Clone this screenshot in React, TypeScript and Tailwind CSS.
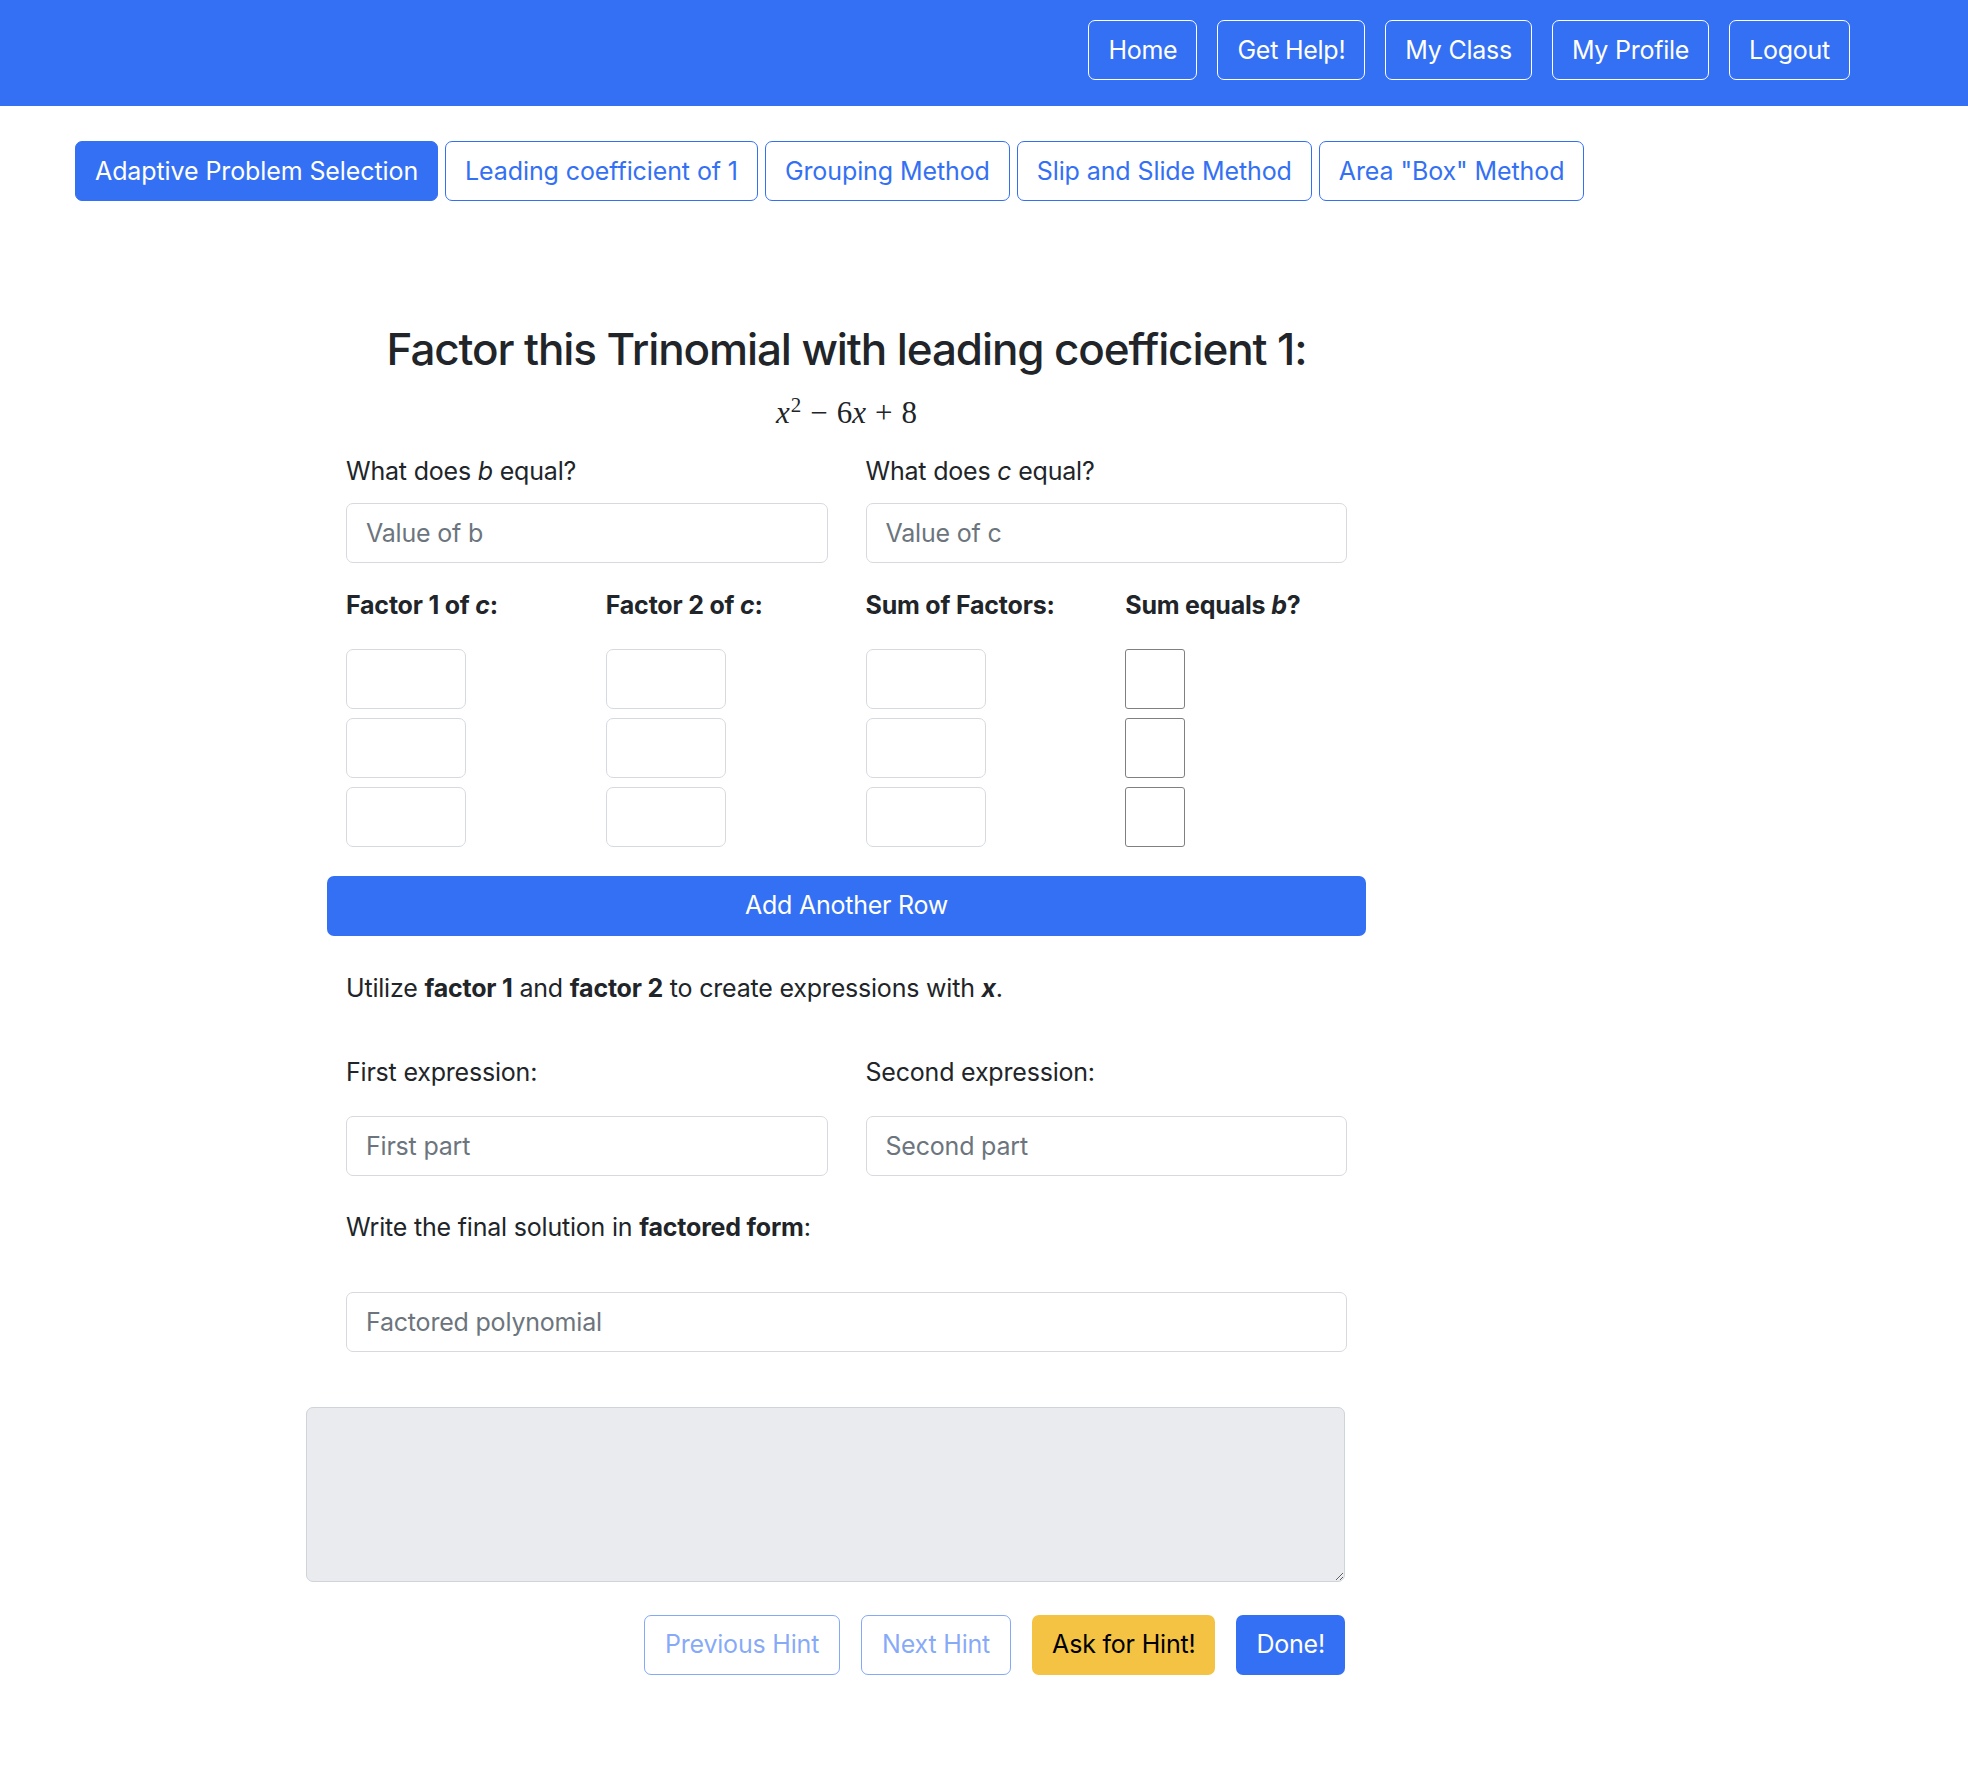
import React from 'react';

const navLinks = ['Home', 'Get Help!', 'My Class', 'My Profile', 'Logout'];
const tabs = ['Adaptive Problem Selection', 'Leading coefficient of 1', 'Grouping Method', 'Slip and Slide Method', 'Area "Box" Method'];

const inputCls =
  'w-full h-[60px] border border-[#d6dadf] rounded-[7px] px-[19px] text-[25px] tracking-[-0.2px] text-[#212529] placeholder:text-[#6c757d] outline-none bg-white';

export default function App() {
  return (
    <div className="min-h-screen bg-white font-['Inter',sans-serif] text-[#212529] text-[25px] tracking-[-0.2px]">
      {/* Top navbar */}
      <header className="h-[106px] bg-[#3470F3] flex justify-end items-start pt-[20px] pr-[118px] gap-[20px]">
        {navLinks.map((l) => (
          <button key={l} className="h-[60px] px-[19px] border border-white rounded-[7px] text-white text-[25px] leading-none tracking-[-0.25px]">
            {l}
          </button>
        ))}
      </header>

      {/* Method tabs */}
      <div className="flex gap-[7px] pl-[75px] mt-[35px]">
        {tabs.map((t, i) => (
          <button
            key={t}
            className={
              i === 0
                ? 'h-[60px] px-[19px] rounded-[7px] bg-[#3470F3] border border-[#3470F3] text-white text-[25px] leading-none tracking-[-0.1px]'
                : 'h-[60px] px-[19px] rounded-[7px] bg-white border border-[#3470F3] text-[#3470F3] text-[25px] leading-none tracking-[-0.1px]'
            }
          >
            {t}
          </button>
        ))}
      </div>

      {/* Problem form */}
      <div className="ml-[327px] w-[1039px] flex flex-col">
        <h3 className="mt-[122px] text-center text-[44px] font-medium leading-[53px] tracking-[-1.1px]">
          Factor this Trinomial with leading coefficient 1:
        </h3>
        <div className="mt-[19px] h-[36px] text-center font-['Liberation_Serif',serif] text-[31px] leading-[36px] tracking-normal">
          <i>x</i>
          <span className="text-[21px] relative -top-[11px] ml-[1px]">2</span>
          <span className="mx-[9px]">−</span>6<i>x</i>
          <span className="mx-[9px]">+</span>8
        </div>

        <div className="flex mt-[21px]">
          <div className="w-1/2 px-[19px]">
            <div className="h-[38px] leading-[38px]">
              What does <i>b</i> equal?
            </div>
            <input className={inputCls + ' mt-[13px]'} placeholder="Value of b" />
          </div>
          <div className="w-1/2 px-[19px]">
            <div className="h-[38px] leading-[38px]">
              What does <i>c</i> equal?
            </div>
            <input className={inputCls + ' mt-[13px]'} placeholder="Value of c" />
          </div>
        </div>

        <div className="flex mt-[23px] font-bold">
          <div className="w-1/4 px-[19px] h-[38px] leading-[38px]">
            Factor 1 of <i>c</i>:
          </div>
          <div className="w-1/4 px-[19px] h-[38px] leading-[38px]">
            Factor 2 of <i>c</i>:
          </div>
          <div className="w-1/4 px-[19px] h-[38px] leading-[38px]">Sum of Factors:</div>
          <div className="w-1/4 px-[19px] h-[38px] leading-[38px]">
            Sum equals <i>b</i>?
          </div>
        </div>

        <div className="mt-[25px] flex flex-col gap-[9px]">
          {[0, 1, 2].map((r) => (
            <div key={r} className="flex">
              {[0, 1, 2].map((c) => (
                <div key={c} className="w-1/4 px-[19px]">
                  <input className="w-[120px] h-[60px] border border-[#d6dadf] rounded-[7px] bg-white outline-none" />
                </div>
              ))}
              <div className="w-1/4 px-[19px]">
                <input
                  type="checkbox"
                  className="appearance-none block w-[60px] h-[60px] border-[1.5px] border-[#808080] rounded-[3px] bg-white"
                />
              </div>
            </div>
          ))}
        </div>

        <button className="mt-[29px] h-[60px] w-full rounded-[7px] bg-[#3470F3] text-white text-[25px] tracking-[-0.25px]">
          Add Another Row
        </button>

        <div className="mt-[33px] px-[19px] h-[38px] leading-[38px]">
          Utilize <b>factor 1</b> and <b>factor 2</b> to create expressions with <b><i>x</i></b>.
        </div>

        <div className="flex mt-[46px]">
          <div className="w-1/2 px-[19px]">
            <div className="h-[38px] leading-[38px]">First expression:</div>
            <input className={inputCls + ' mt-[25px]'} placeholder="First part" />
          </div>
          <div className="w-1/2 px-[19px]">
            <div className="h-[38px] leading-[38px]">Second expression:</div>
            <input className={inputCls + ' mt-[25px]'} placeholder="Second part" />
          </div>
        </div>

        <div className="mt-[32px] px-[19px] h-[38px] leading-[38px]">
          Write the final solution in <b>factored form</b>:
        </div>

        <div className="mt-[46px] px-[19px]">
          <input className={inputCls} placeholder="Factored polynomial" />
        </div>
      </div>

      {/* Hint area */}
      <div className="ml-[306px] w-[1039px] pb-[118px]">
        <textarea
          readOnly
          className="mt-[55px] block w-full h-[175px] bg-[#e9ebef] border border-[#ced4da] rounded-[7px] outline-none"
        />
        <div className="mt-[33px] flex justify-end gap-[21px]">
          <button className="h-[60px] px-[20px] rounded-[7px] border border-[#3470F3]/60 text-[#3470F3]/60 text-[25px] tracking-[-0.2px]">
            Previous Hint
          </button>
          <button className="h-[60px] px-[20px] rounded-[7px] border border-[#3470F3]/60 text-[#3470F3]/60 text-[25px] tracking-[-0.2px]">
            Next Hint
          </button>
          <button className="h-[60px] px-[20px] rounded-[7px] bg-[#F5C344] text-black text-[25px] tracking-[-0.2px]">Ask for Hint!</button>
          <button className="h-[60px] px-[20px] rounded-[7px] bg-[#3470F3] text-white text-[25px] tracking-[-0.2px]">Done!</button>
        </div>
      </div>
    </div>
  );
}
